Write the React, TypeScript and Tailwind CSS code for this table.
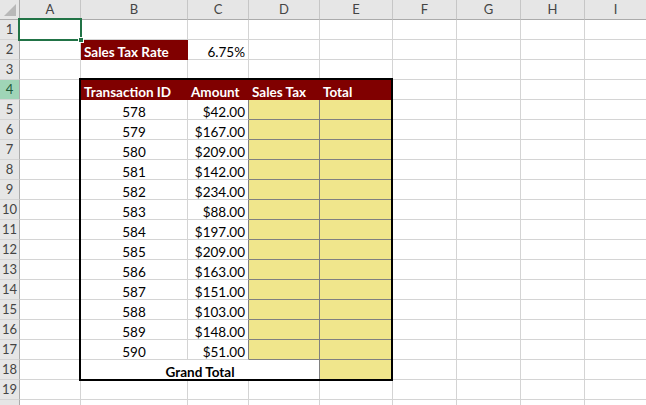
const COLS = ["A", "B", "C", "D", "E", "F", "G", "H", "I"];
const ROWS = Array.from({ length: 20 }, (_, i) => i + 1);

const IDS = [578, 579, 580, 581, 582, 583, 584, 585, 586, 587, 588, 589, 590];
const AMOUNTS = [42, 167, 209, 142, 234, 88, 197, 209, 163, 151, 103, 148, 51];

const MAROON = "bg-[#800000] border-[#800000] text-white font-bold";
const YELLOW = "bg-[#f0e68c] border-[#808080]";

type CellProps = {
  className?: string;
  children?: React.ReactNode;
};

function Cell({ className = "", children }: CellProps) {
  return (
    <div
      className={`flex items-end overflow-hidden whitespace-nowrap border-r border-b px-[3px] text-[13.5px] leading-none text-black ${className}`}
    >
      {children}
    </div>
  );
}

function ColHeader({ label }: { label: string }) {
  return (
    <div className="flex items-center justify-center border-r border-b border-r-[#c6c6c6] border-b-[#ababab] bg-[#e6e6e6] text-[13px] text-[#444]">
      {label}
    </div>
  );
}

function RowHeader({ n }: { n: number }) {
  const active = n === 4;
  return (
    <div
      className={`flex items-center justify-center border-r border-b border-r-[#ababab] border-b-[#d4d4d4] text-[13px] ${
        active ? "bg-[#9fd5b7] text-[#1e5a37]" : "bg-[#e6e6e6] text-[#444]"
      }`}
    >
      {/* row 20 is only a sliver at the bottom edge */}
      {n < 20 ? n : null}
    </div>
  );
}

function cellFor(row: number, col: string) {
  const grid = "border-[#d4d4d4]";
  if (row === 2 && col === "B") return <Cell className={MAROON}>Sales Tax Rate</Cell>;
  if (row === 2 && col === "C")
    return <Cell className={`${grid} justify-end`}>6.75%</Cell>;
  if (row === 4) {
    const labels: Record<string, string> = {
      B: "Transaction ID",
      C: "Amount",
      D: "Sales Tax",
      E: "Total",
    };
    if (labels[col]) return <Cell className={MAROON}>{labels[col]}</Cell>;
  }
  if (row >= 5 && row <= 17) {
    const i = row - 5;
    if (col === "B")
      return <Cell className={`${grid} justify-center`}>{IDS[i]}</Cell>;
    if (col === "C")
      return (
        <Cell className={`${grid} border-r-[#808080] justify-end`}>
          ${AMOUNTS[i].toFixed(2)}
        </Cell>
      );
    if (col === "D" || col === "E") return <Cell className={YELLOW} />;
  }
  if (row === 18) {
    if (col === "B")
      return (
        <Cell className="col-span-3 justify-center border-r-[#808080] border-b-[#d4d4d4] font-bold">
          Grand Total
        </Cell>
      );
    if (col === "C" || col === "D") return null;
    if (col === "E") return <Cell className={YELLOW} />;
  }
  return <Cell className={grid} />;
}

export default function App() {
  return (
    <div className="h-[405px] w-[646px] overflow-hidden bg-white font-['Lato',_sans-serif]">
      <div className="relative grid auto-rows-[20px] grid-cols-[20px_61px_107px_61px_71px_73px_64px_64px_64px_62px]">
        <div className="relative border-r border-b border-r-[#ababab] border-b-[#ababab] bg-[#e6e6e6]">
          <svg className="absolute right-[3px] bottom-[3px]" width="12" height="12" viewBox="0 0 12 12">
            <polygon points="12,0 12,12 0,12" fill="#b8b8b8" />
          </svg>
        </div>
        {COLS.map((c) => (
          <ColHeader key={c} label={c} />
        ))}
        {ROWS.map((r) => (
          <div key={r} className="contents">
            <RowHeader n={r} />
            {COLS.map((c) => {
              const el = cellFor(r, c);
              return el ? <div key={c} className="contents">{el}</div> : null;
            })}
          </div>
        ))}

        {/* table outline */}
        <div className="pointer-events-none absolute top-[78px] left-[79px] h-[303px] w-[314px] border-2 border-black" />

        {/* active cell A1 */}
        <div className="pointer-events-none absolute top-[18px] left-[18px] h-[23px] w-[64px] border-2 border-[#217346]" />
        <div className="pointer-events-none absolute top-[37px] left-[78px] h-[6px] w-[6px] border border-white bg-[#217346]" />
      </div>
    </div>
  );
}
